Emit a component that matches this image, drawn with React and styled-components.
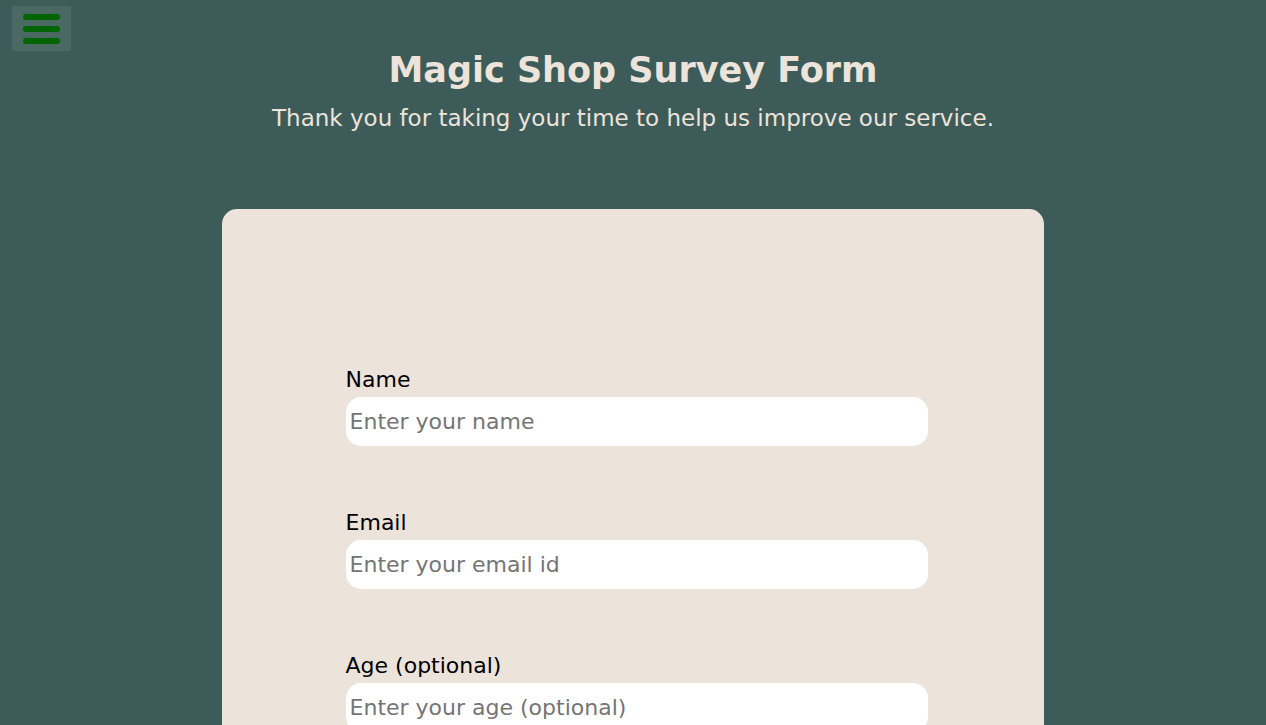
import React from "react";
import styled, { createGlobalStyle } from "styled-components";

const GlobalStyle = createGlobalStyle`
  *, *::before, *::after {
    box-sizing: border-box;
  }

  body {
    margin: 0;
    background: #3d5b58;
    color: #000;
    font-family: "DejaVu Sans", sans-serif;
    font-size: 22px;
    line-height: 32px;
  }
`;

const Page = styled.div`
  position: relative;
  display: flex;
  flex-direction: column;
  align-items: center;
`;

const MenuButton = styled.button`
  position: absolute;
  top: 6px;
  left: 12px;
  display: flex;
  flex-direction: column;
  gap: 6px;
  padding: 8px 11px 7px;
  border: 0;
  background: #4b6963;
  cursor: pointer;
`;

const MenuBar = styled.span`
  width: 37px;
  height: 6px;
  border-radius: 3px;
  background: #006400;
`;

const Header = styled.header`
  padding: 40px 16px 73px;
  color: #ece3da;
  text-align: center;
`;

const Title = styled.h1`
  margin: 0;
  font-size: 35px;
  line-height: 60px;
  font-weight: 700;
`;

const Subtitle = styled.p`
  margin: 0;
  font-size: 23px;
  line-height: 36px;
`;

const SurveyForm = styled.form`
  display: flex;
  flex-direction: column;
  gap: 60px;
  width: 65%;
  padding: 154px 116px 60px 124px;
  border-radius: 15px;
  background: #ece3da;
`;

const Field = styled.div`
  display: flex;
  flex-direction: column;
`;

const Label = styled.label`
  font-size: 22px;
  line-height: 34px;
`;

const TextInput = styled.input`
  width: 100%;
  height: 49px;
  padding: 0 4px;
  border: 0;
  border-radius: 15px;
  background: #fff;
  color: #000;
  font: inherit;

  &::placeholder {
    color: #757575;
    opacity: 1;
  }
`;

const fields = [
  { id: "name", type: "text", label: "Name", placeholder: "Enter your name" },
  { id: "email", type: "email", label: "Email", placeholder: "Enter your email id" },
  { id: "age", type: "number", label: "Age (optional)", placeholder: "Enter your age (optional)" },
];

export default function App() {
  return (
    <>
      <GlobalStyle />
      <Page>
        <MenuButton type="button" aria-label="Menu">
          <MenuBar />
          <MenuBar />
          <MenuBar />
        </MenuButton>
        <Header>
          <Title>Magic Shop Survey Form</Title>
          <Subtitle>Thank you for taking your time to help us improve our service.</Subtitle>
        </Header>
        <SurveyForm>
          {fields.map(({ id, type, label, placeholder }) => (
            <Field key={id}>
              <Label htmlFor={id}>{label}</Label>
              <TextInput id={id} name={id} type={type} placeholder={placeholder} />
            </Field>
          ))}
        </SurveyForm>
      </Page>
    </>
  );
}
